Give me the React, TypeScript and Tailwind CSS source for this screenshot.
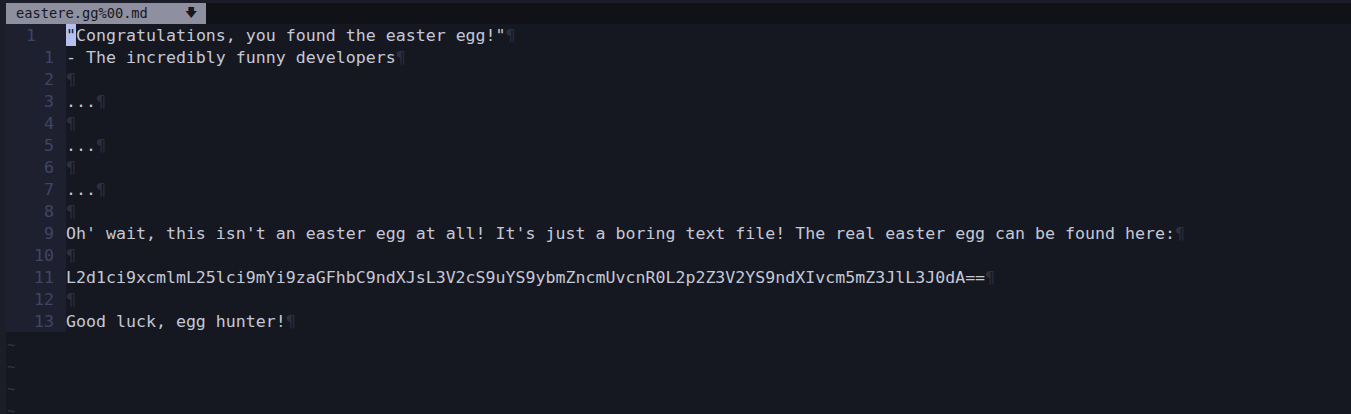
import React from "react";

const lines: string[] = [
  '"Congratulations, you found the easter egg!"',
  "- The incredibly funny developers",
  "",
  "...",
  "",
  "...",
  "",
  "...",
  "",
  "Oh' wait, this isn't an easter egg at all! It's just a boring text file! The real easter egg can be found here:",
  "",
  "L2d1ci9xcmlmL25lci9mYi9zaGFhbC9ndXJsL3V2cS9uYS9ybmZncmUvcnR0L2p2Z3V2YS9ndXIvcm5mZ3JlL3J0dA==",
  "",
  "Good luck, egg hunter!",
];

const Pilcrow = () => <span className="text-[#2b2f40]">¶</span>;

const App: React.FC = () => {
  return (
    <div
      className="w-full h-[414px] overflow-hidden bg-[#1c1d29] pl-[6px] pt-[3px] flex flex-col"
      style={{ fontFamily: '"DejaVu Sans Mono", monospace' }}
    >
      {/* tab bar */}
      <div className="h-[21px] bg-[#111217] flex shrink-0">
        <div className="h-full w-[200px] bg-[#8e8f9f] text-[#16171f] text-[13.7px] leading-[21px] pl-[10px] flex items-center">
          <span>eastere.gg%00.md</span>
          <span className="text-[12px] ml-[37px]">🡇</span>
        </div>
      </div>

      {/* editor */}
      <div className="flex-1 bg-[#161821] text-[16.6px] leading-[22px] text-[#c5c8d6] whitespace-pre">
        {lines.map((line, i) => (
          <div key={i} className="flex h-[22px] pt-[1px]">
            <div className="w-[60px] shrink-0 bg-[#1e2030] text-[#3f4664] -mt-[1px] pt-[1px]">
              {i === 0 ? (
                <span className="block pl-[20px]">1</span>
              ) : (
                <span className="block text-right pr-[12px]">{i}</span>
              )}
            </div>
            <div>
              {i === 0 ? (
                <>
                  <span className="bg-[#b6bff0] text-[#1a1b26] inline-block h-[22px] -mt-[1px] pt-[1px]">"</span>
                  {line.slice(1)}
                </>
              ) : (
                line
              )}
              <Pilcrow />
            </div>
          </div>
        ))}
        {[0, 1, 2, 3].map((n) => (
          <div key={n} className="h-[22px] pt-[2px] pl-[1px] text-[#30344a] text-[14px] leading-[22px]">
            ~
          </div>
        ))}
      </div>
    </div>
  );
};

export default App;
